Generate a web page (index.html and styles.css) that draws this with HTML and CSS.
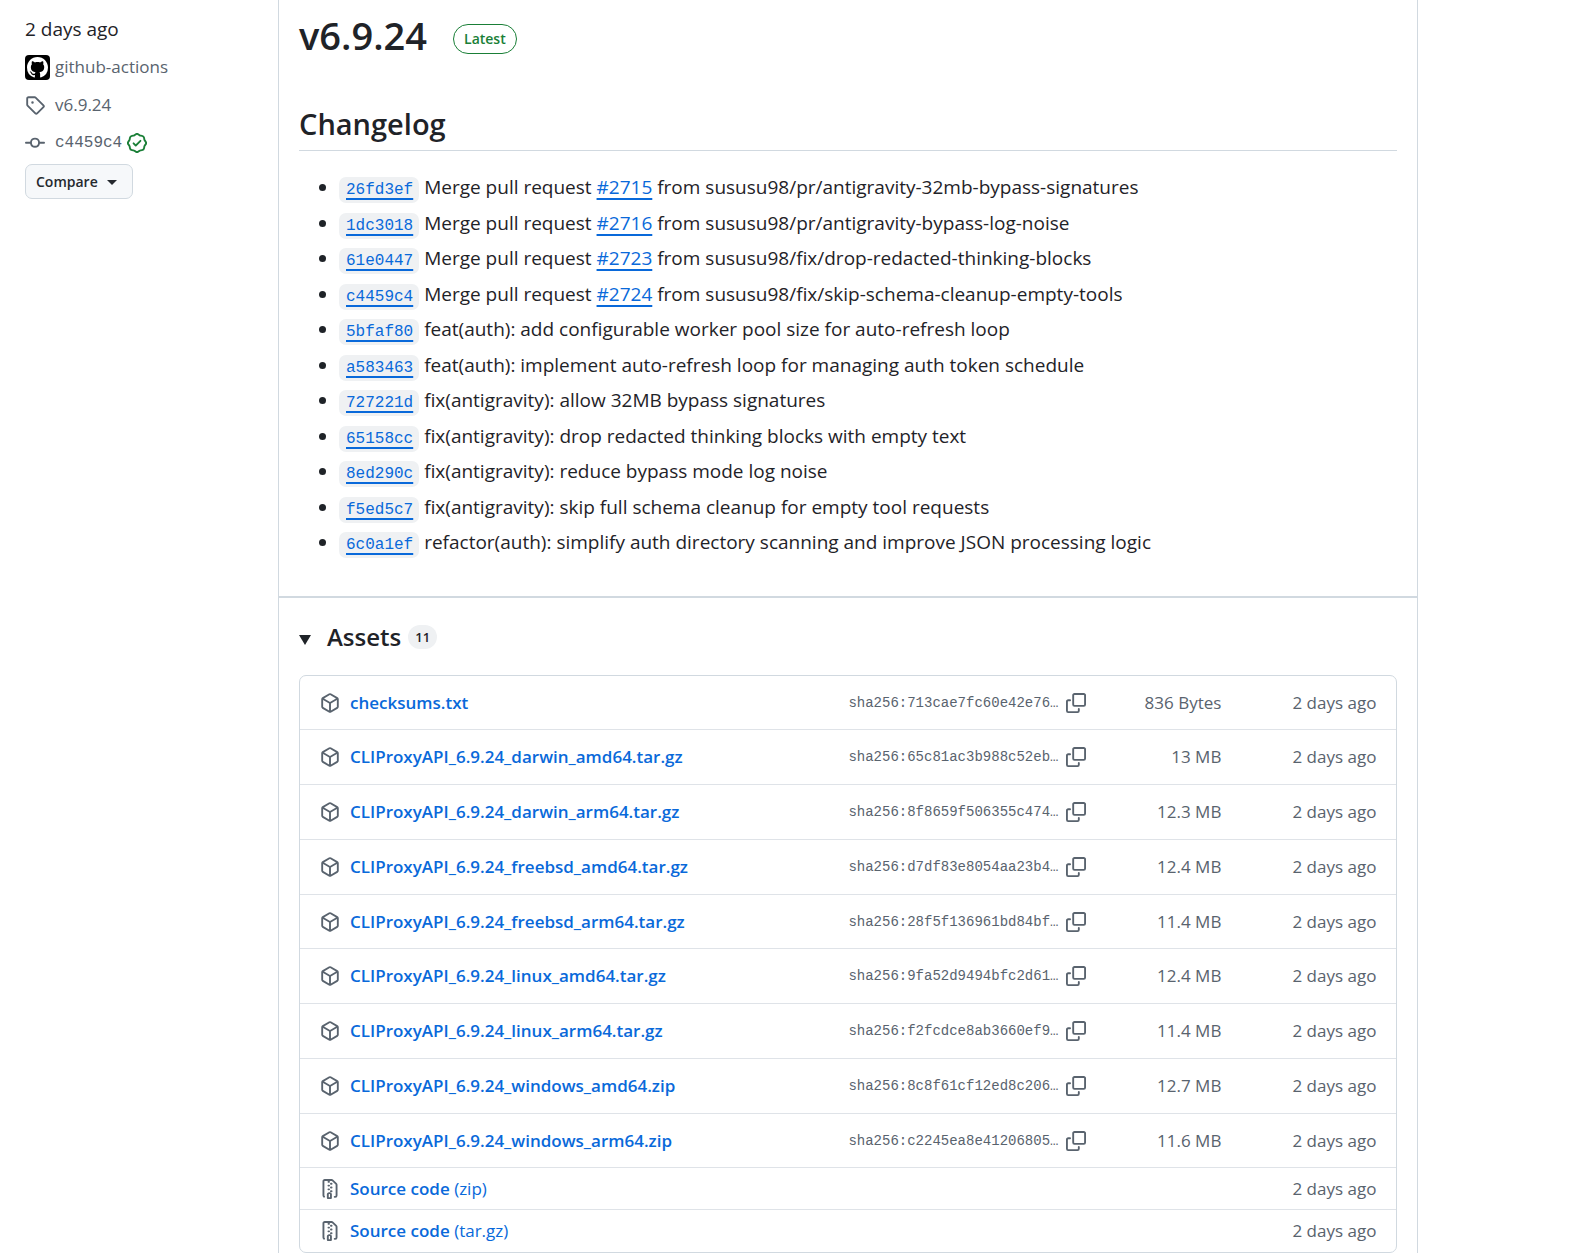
FILE: index.html
```
<!DOCTYPE html>
<html lang="en">
<head>
<meta charset="utf-8">
<title>Release v6.9.24</title>
<link rel="stylesheet" href="styles.css">
</head>
<body>
<svg class="sprite" aria-hidden="true">
  <symbol id="package" viewBox="0 0 16 16"><path d="m8.878.392 5.25 3.045c.54.314.872.89.872 1.514v6.098a1.75 1.75 0 0 1-.872 1.514l-5.25 3.045a1.75 1.75 0 0 1-1.756 0l-5.25-3.045A1.75 1.75 0 0 1 1 11.049V4.951c0-.624.332-1.201.872-1.514L7.122.392a1.75 1.75 0 0 1 1.756 0ZM7.875 1.69l-4.63 2.685L8 7.133l4.755-2.758-4.63-2.685a.248.248 0 0 0-.25 0ZM2.5 5.677v5.372c0 .09.047.171.125.216l4.625 2.683V8.432Zm6.25 8.271 4.625-2.683a.25.25 0 0 0 .125-.216V5.677L8.75 8.432Z"/></symbol>
  <symbol id="zip" viewBox="0 0 16 16"><path d="M3.5 1.75v11.5c0 .09.048.173.126.217a.75.75 0 0 1-.752 1.298A1.748 1.748 0 0 1 2 13.25V1.75C2 .784 2.784 0 3.75 0h5.586c.464 0 .909.185 1.237.513l2.914 2.914c.329.328.513.773.513 1.237v8.586A1.75 1.75 0 0 1 12.25 15h-.5a.75.75 0 0 1 0-1.5h.5a.25.25 0 0 0 .25-.25V4.664a.25.25 0 0 0-.073-.177L9.513 1.573a.25.25 0 0 0-.177-.073H7.25a.75.75 0 0 1 0 1.5h-.5a.75.75 0 0 1 0-1.5h-3a.25.25 0 0 0-.25.25Zm3.75 8.75h.5c.966 0 1.75.784 1.75 1.75v3a.75.75 0 0 1-.75.75h-2.5a.75.75 0 0 1-.75-.75v-3c0-.966.784-1.75 1.75-1.75ZM6 5.25a.75.75 0 0 1 .75-.75h.5a.75.75 0 0 1 0 1.5h-.5A.75.75 0 0 1 6 5.25Zm.75 2.25h.5a.75.75 0 0 1 0 1.5h-.5a.75.75 0 0 1 0-1.5ZM8 6.75A.75.75 0 0 1 8.75 6h.5a.75.75 0 0 1 0 1.5h-.5A.75.75 0 0 1 8 6.75ZM8.75 3h.5a.75.75 0 0 1 0 1.5h-.5a.75.75 0 0 1 0-1.5ZM8 9.75A.75.75 0 0 1 8.75 9h.5a.75.75 0 0 1 0 1.5h-.5A.75.75 0 0 1 8 9.75Zm-1 2.5v2.25h1v-2.25a.25.25 0 0 0-.25-.25h-.5a.25.25 0 0 0-.25.25Z"/></symbol>
  <symbol id="copy" viewBox="0 0 16 16"><path d="M0 6.75C0 5.784.784 5 1.75 5h1.5a.75.75 0 0 1 0 1.5h-1.5a.25.25 0 0 0-.25.25v7.5c0 .138.112.25.25.25h7.5a.25.25 0 0 0 .25-.25v-1.5a.75.75 0 0 1 1.5 0v1.5A1.75 1.75 0 0 1 9.25 16h-7.5A1.75 1.75 0 0 1 0 14.25Z"/><path d="M5 1.75C5 .784 5.784 0 6.75 0h7.5C15.216 0 16 .784 16 1.75v7.5A1.75 1.75 0 0 1 14.25 11h-7.5A1.75 1.75 0 0 1 5 9.25Zm1.75-.25a.25.25 0 0 0-.25.25v7.5c0 .138.112.25.25.25h7.5a.25.25 0 0 0 .25-.25v-7.5a.25.25 0 0 0-.25-.25Z"/></symbol>
</svg>
<div class="release">
  <aside class="meta">
    <div class="meta-row meta-date">2 days ago</div>
    <div class="meta-row">
      <span class="meta-icon"><span class="avatar"><svg class="mark" viewBox="0 0 16 16"><path d="M8 0c4.42 0 8 3.58 8 8a8.013 8.013 0 0 1-5.45 7.59c-.4.08-.55-.17-.55-.38 0-.27.01-1.13.01-2.2 0-.75-.25-1.23-.54-1.48 1.78-.2 3.65-.88 3.65-3.95 0-.88-.31-1.59-.82-2.15.08-.2.36-1.02-.08-2.12 0 0-.67-.22-2.2.82-.64-.18-1.32-.27-2-.27-.68 0-1.36.09-2 .27-1.53-1.03-2.2-.82-2.2-.82-.44 1.1-.16 1.92-.08 2.12-.51.56-.82 1.28-.82 2.15 0 3.06 1.86 3.75 3.64 3.95-.23.2-.44.55-.51 1.07-.46.21-1.61.55-2.33-.66-.15-.24-.6-.83-1.23-.82-.67.01-.27.38.01.53.34.19.73.9.82 1.13.16.45.68 1.31 2.69.94 0 .67.01 1.3.01 1.49 0 .21-.15.45-.55.38A7.995 7.995 0 0 1 0 8c0-4.42 3.58-8 8-8Z"/></svg></span></span>
      <a href="#">github-actions</a>
    </div>
    <div class="meta-row">
      <span class="meta-icon"><svg class="icon" viewBox="0 0 16 16"><path d="M1 7.775V2.75C1 1.784 1.784 1 2.75 1h5.025c.464 0 .91.184 1.238.513l6.25 6.25a1.75 1.75 0 0 1 0 2.474l-5.026 5.026a1.75 1.75 0 0 1-2.474 0l-6.25-6.25A1.752 1.752 0 0 1 1 7.775Zm1.5 0c0 .066.026.13.073.177l6.25 6.25a.25.25 0 0 0 .354 0l5.025-5.025a.25.25 0 0 0 0-.354l-6.25-6.25a.25.25 0 0 0-.177-.073H2.75a.25.25 0 0 0-.25.25ZM6 5a1 1 0 1 1 0 2 1 1 0 0 1 0-2Z"/></svg></span>
      <a href="#">v6.9.24</a>
    </div>
    <div class="meta-row">
      <span class="meta-icon"><svg class="icon" viewBox="0 0 16 16"><path d="M11.93 8.5a4.002 4.002 0 0 1-7.86 0H.75a.75.75 0 0 1 0-1.5h3.32a4.002 4.002 0 0 1 7.86 0h3.32a.75.75 0 0 1 0 1.5Zm-1.43-.75a2.5 2.5 0 1 0-5 0 2.5 2.5 0 0 0 5 0Z"/></svg></span>
      <a href="#" class="commit">c4459c4</a>
      <svg class="icon verified" viewBox="0 0 16 16"><path d="m9.585.52.929.68c.153.112.331.186.518.215l1.138.175a2.678 2.678 0 0 1 2.24 2.24l.174 1.139c.029.187.103.365.215.518l.68.928a2.677 2.677 0 0 1 0 3.17l-.68.928a1.174 1.174 0 0 0-.215.518l-.175 1.138a2.678 2.678 0 0 1-2.241 2.241l-1.138.175a1.17 1.17 0 0 0-.518.215l-.928.68a2.677 2.677 0 0 1-3.17 0l-.928-.68a1.174 1.174 0 0 0-.518-.215L3.83 14.41a2.678 2.678 0 0 1-2.24-2.24l-.175-1.138a1.17 1.17 0 0 0-.215-.518l-.68-.928a2.677 2.677 0 0 1 0-3.17l.68-.928c.112-.153.186-.331.215-.518l.175-1.14a2.678 2.678 0 0 1 2.24-2.24l1.139-.175c.187-.029.365-.103.518-.215l.928-.68a2.677 2.677 0 0 1 3.17 0ZM7.303 1.728l-.927.68a2.67 2.67 0 0 1-1.18.489l-1.137.174a1.179 1.179 0 0 0-.987.987l-.174 1.136a2.677 2.677 0 0 1-.489 1.18l-.68.928a1.18 1.18 0 0 0 0 1.394l.68.927c.256.348.424.753.489 1.18l.174 1.137c.078.509.478.909.987.987l1.136.174a2.67 2.67 0 0 1 1.18.489l.928.68c.414.305.979.305 1.394 0l.927-.68a2.67 2.67 0 0 1 1.18-.489l1.137-.174a1.18 1.18 0 0 0 .987-.987l.174-1.136a2.67 2.67 0 0 1 .489-1.18l.68-.928a1.176 1.176 0 0 0 0-1.394l-.68-.927a2.686 2.686 0 0 1-.489-1.18l-.174-1.137a1.179 1.179 0 0 0-.987-.987l-1.136-.174a2.677 2.677 0 0 1-1.18-.489l-.928-.68a1.176 1.176 0 0 0-1.394 0ZM11.28 6.78l-3.75 3.75a.75.75 0 0 1-1.06 0L4.72 8.78a.751.751 0 0 1 .018-1.042.751.751 0 0 1 1.042-.018L7 8.94l3.22-3.22a.751.751 0 0 1 1.042.018.751.751 0 0 1 .018 1.042Z"/></svg>
    </div>
    <button type="button" class="compare">Compare <span class="caret"></span></button>
  </aside>

  <main class="box">
    <section class="notes">
      <header class="title-row">
        <h1>v6.9.24</h1>
        <a href="#" class="label">Latest</a>
      </header>
      <h2>Changelog</h2>
      <ul class="changes">
        <li><a href="#"><code>26fd3ef</code></a> Merge pull request <a href="#">#2715</a> from sususu98/pr/antigravity-32mb-bypass-signatures</li>
        <li><a href="#"><code>1dc3018</code></a> Merge pull request <a href="#">#2716</a> from sususu98/pr/antigravity-bypass-log-noise</li>
        <li><a href="#"><code>61e0447</code></a> Merge pull request <a href="#">#2723</a> from sususu98/fix/drop-redacted-thinking-blocks</li>
        <li><a href="#"><code>c4459c4</code></a> Merge pull request <a href="#">#2724</a> from sususu98/fix/skip-schema-cleanup-empty-tools</li>
        <li><a href="#"><code>5bfaf80</code></a> feat(auth): add configurable worker pool size for auto-refresh loop</li>
        <li><a href="#"><code>a583463</code></a> feat(auth): implement auto-refresh loop for managing auth token schedule</li>
        <li><a href="#"><code>727221d</code></a> fix(antigravity): allow 32MB bypass signatures</li>
        <li><a href="#"><code>65158cc</code></a> fix(antigravity): drop redacted thinking blocks with empty text</li>
        <li><a href="#"><code>8ed290c</code></a> fix(antigravity): reduce bypass mode log noise</li>
        <li><a href="#"><code>f5ed5c7</code></a> fix(antigravity): skip full schema cleanup for empty tool requests</li>
        <li><a href="#"><code>6c0a1ef</code></a> refactor(auth): simplify auth directory scanning and improve JSON processing logic</li>
      </ul>
    </section>

    <details class="assets" open>
      <summary><span class="marker"></span><span class="assets-title">Assets</span><span class="counter">11</span></summary>
      <div class="table-box">
        <table>
          <colgroup><col><col class="col-sha"><col class="col-copy"><col class="col-size"><col class="col-date"></colgroup>
          <tbody>
            <tr><td><div class="name"><svg class="icon"><use href="#package"/></svg><a href="#">checksums.txt</a></div></td><td class="sha">sha256:713cae7fc60e42e76…</td><td><button type="button" class="copy" aria-label="Copy"><svg class="icon"><use href="#copy"/></svg></button></td><td>836 Bytes</td><td>2 days ago</td></tr>
            <tr><td><div class="name"><svg class="icon"><use href="#package"/></svg><a href="#">CLIProxyAPI_6.9.24_darwin_amd64.tar.gz</a></div></td><td class="sha">sha256:65c81ac3b988c52eb…</td><td><button type="button" class="copy" aria-label="Copy"><svg class="icon"><use href="#copy"/></svg></button></td><td>13 MB</td><td>2 days ago</td></tr>
            <tr><td><div class="name"><svg class="icon"><use href="#package"/></svg><a href="#">CLIProxyAPI_6.9.24_darwin_arm64.tar.gz</a></div></td><td class="sha">sha256:8f8659f506355c474…</td><td><button type="button" class="copy" aria-label="Copy"><svg class="icon"><use href="#copy"/></svg></button></td><td>12.3 MB</td><td>2 days ago</td></tr>
            <tr><td><div class="name"><svg class="icon"><use href="#package"/></svg><a href="#">CLIProxyAPI_6.9.24_freebsd_amd64.tar.gz</a></div></td><td class="sha">sha256:d7df83e8054aa23b4…</td><td><button type="button" class="copy" aria-label="Copy"><svg class="icon"><use href="#copy"/></svg></button></td><td>12.4 MB</td><td>2 days ago</td></tr>
            <tr><td><div class="name"><svg class="icon"><use href="#package"/></svg><a href="#">CLIProxyAPI_6.9.24_freebsd_arm64.tar.gz</a></div></td><td class="sha">sha256:28f5f136961bd84bf…</td><td><button type="button" class="copy" aria-label="Copy"><svg class="icon"><use href="#copy"/></svg></button></td><td>11.4 MB</td><td>2 days ago</td></tr>
            <tr><td><div class="name"><svg class="icon"><use href="#package"/></svg><a href="#">CLIProxyAPI_6.9.24_linux_amd64.tar.gz</a></div></td><td class="sha">sha256:9fa52d9494bfc2d61…</td><td><button type="button" class="copy" aria-label="Copy"><svg class="icon"><use href="#copy"/></svg></button></td><td>12.4 MB</td><td>2 days ago</td></tr>
            <tr><td><div class="name"><svg class="icon"><use href="#package"/></svg><a href="#">CLIProxyAPI_6.9.24_linux_arm64.tar.gz</a></div></td><td class="sha">sha256:f2fcdce8ab3660ef9…</td><td><button type="button" class="copy" aria-label="Copy"><svg class="icon"><use href="#copy"/></svg></button></td><td>11.4 MB</td><td>2 days ago</td></tr>
            <tr><td><div class="name"><svg class="icon"><use href="#package"/></svg><a href="#">CLIProxyAPI_6.9.24_windows_amd64.zip</a></div></td><td class="sha">sha256:8c8f61cf12ed8c206…</td><td><button type="button" class="copy" aria-label="Copy"><svg class="icon"><use href="#copy"/></svg></button></td><td>12.7 MB</td><td>2 days ago</td></tr>
            <tr><td><div class="name"><svg class="icon"><use href="#package"/></svg><a href="#">CLIProxyAPI_6.9.24_windows_arm64.zip</a></div></td><td class="sha">sha256:c2245ea8e41206805…</td><td><button type="button" class="copy" aria-label="Copy"><svg class="icon"><use href="#copy"/></svg></button></td><td>11.6 MB</td><td>2 days ago</td></tr>
            <tr class="source"><td colspan="4"><div class="name"><svg class="icon"><use href="#zip"/></svg><a href="#">Source code <span class="ext">(zip)</span></a></div></td><td>2 days ago</td></tr>
            <tr class="source"><td colspan="4"><div class="name"><svg class="icon"><use href="#zip"/></svg><a href="#">Source code <span class="ext">(tar.gz)</span></a></div></td><td>2 days ago</td></tr>
          </tbody>
        </table>
      </div>
    </details>
  </main>
</div>
</body>
</html>
```
FILE: styles.css
```
* { box-sizing: border-box; }
body {
  margin: 0;
  background: #fff;
  color: #1f2328;
  font-family: "Open Sans", "Noto Sans", sans-serif;
  font-size: 19px;
  line-height: 30px;
}
a { color: #0969da; text-decoration: none; }
.sprite { display: none; }
.icon { width: 20px; height: 20px; fill: #59636e; flex: none; display: block; }

.release {
  display: grid;
  grid-template-columns: 278px minmax(0, 1fr);
  padding-right: 10%;
}

/* Sidebar */
.meta { padding: 14px 25px; color: #59636e; font-size: 17px; }
.meta a { color: #59636e; }
.meta-row { display: flex; align-items: center; height: 30px; margin-bottom: 8px; }
.meta-row:nth-child(4) { margin-bottom: 6px; }
.meta-date { color: #1f2328; font-size: 19px; }
.meta-icon { width: 30px; flex: none; }
.avatar {
  display: flex;
  align-items: center;
  justify-content: center;
  width: 25px;
  height: 25px;
  border-radius: 4px;
  background: #000;
}
.mark { width: 21px; height: 21px; fill: #fff; }
.meta .commit { font-family: "Liberation Mono", monospace; font-size: 16px; }
.verified { fill: #1a7f37; margin-left: 5px; }
.compare {
  display: flex;
  align-items: center;
  gap: 9px;
  height: 35px;
  padding: 0 15px 0 10px;
  border: 1px solid #d1d9e0;
  border-radius: 7px;
  background: #f6f8fa;
  color: #25292e;
  font: 600 14px/20px "Open Sans", sans-serif;
}
.caret { border: 5px solid transparent; border-top-color: #25292e; border-bottom: 0; margin-top: 2px; }

/* Release body */
.box { border: solid #d1d9e0; border-width: 0 1px; }
.notes { padding: 0 20px 39px; border-bottom: 2px solid #d1d9e0; }
.title-row { display: flex; align-items: center; gap: 26px; height: 78px; }
h1 { margin: 0; padding-bottom: 8px; font-size: 38px; font-weight: 600; line-height: 60px; }
.label {
  height: 30px;
  padding: 0 10px;
  border: 1px solid #1a7f37;
  border-radius: 15px;
  color: #1a7f37;
  font-size: 14px;
  font-weight: 600;
  line-height: 28px;
}
h2 {
  margin: 26px 0 21px;
  padding-bottom: 6px;
  border-bottom: 1px solid #d1d9e0;
  font-size: 29px;
  font-weight: 600;
  line-height: 40px;
}
.changes { margin: 0; padding-left: 40px; }
.changes li { height: 30px; margin-top: 5px; }
.changes li:nth-child(even) { margin-top: 6px; }
.changes a { text-decoration: underline; text-decoration-thickness: 2px; text-underline-offset: 4px; }
code {
  padding: 4px 6px 4px 7px;
  border-radius: 7px;
  background: #eff1f3;
  font-family: "Liberation Mono", monospace;
  font-size: 16px;
}

/* Assets */
.assets { padding: 20px 20px 0; }
summary { display: flex; align-items: center; height: 38px; margin-bottom: 19px; list-style: none; }
.marker { border: 6px solid transparent; border-top: 10px solid #1f2328; border-bottom: 0; margin: 6px 16px 0 0; }
.assets-title { font-size: 24px; font-weight: 600; }
.counter {
  margin-left: 7px;
  padding: 0 7px;
  border-radius: 12px;
  background: #eff1f3;
  font-size: 13px;
  font-weight: 600;
  line-height: 24px;
}
.table-box { border: 1px solid #d1d9e0; border-radius: 7px; }
table { width: 100%; table-layout: fixed; border-collapse: separate; border-spacing: 0; font-size: 17px; }
.col-sha { width: 218px; }
.col-copy { width: 20px; }
.col-size { width: 135px; }
.col-date { width: 175px; }
tr { height: 55px; }
tr:nth-child(4n + 1) { height: 54px; }
tr.source { height: 42px; }
td { padding: 0; border-bottom: 1px solid #dfe3e8; color: #59636e; text-align: right; white-space: nowrap; }
tr:last-child td { border-bottom: 0; }
td:first-child { padding-left: 20px; text-align: left; }
td:last-child { padding-right: 20px; }
td.sha { font-family: "Liberation Mono", monospace; font-size: 14px; text-align: left; }
.name { display: flex; align-items: center; gap: 10px; font-weight: 600; }
.ext { font-weight: 400; }
.copy { display: block; padding: 0; border: 0; background: none; }
```
